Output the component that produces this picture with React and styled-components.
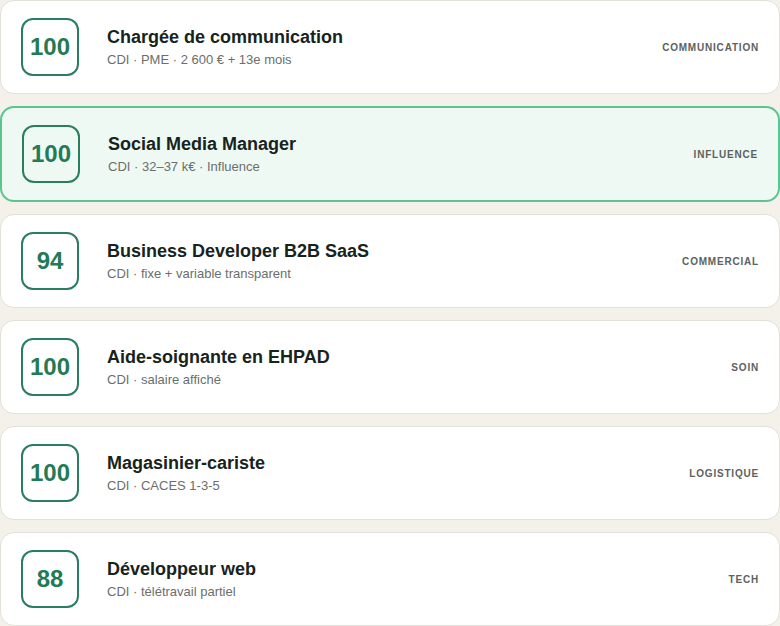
import styled, { createGlobalStyle } from "styled-components";

const GlobalStyle = createGlobalStyle`
  html, body {
    margin: 0;
    padding: 0;
    background: #f3f1ea;
    font-family: "Liberation Sans", Arial, sans-serif;
  }
`;

const List = styled.div`
  display: flex;
  flex-direction: column;
  gap: 12px;
  width: 780px;
`;

const Card = styled.div`
  display: flex;
  align-items: center;
  box-sizing: border-box;
  padding: 17px 20px;
  border-radius: 14px;
  background: ${(p) => (p.active ? "#eff9f3" : "#ffffff")};
  border: ${(p) => (p.active ? "2px solid #5cc58f" : "1px solid #e2e0d8")};
`;

const Score = styled.div`
  flex: none;
  width: 58px;
  height: 58px;
  box-sizing: border-box;
  border: 2px solid #2a7d5e;
  border-radius: 12px;
  display: flex;
  align-items: center;
  justify-content: center;
  color: #237a57;
  font-size: 24px;
  font-weight: 700;
`;

const Info = styled.div`
  flex: 1;
  margin-left: 28px;
  display: flex;
  flex-direction: column;
  gap: 4px;
`;

const Title = styled.div`
  font-size: 18px;
  font-weight: 700;
  color: #17231d;
`;

const Meta = styled.div`
  font-size: 13px;
  color: #6b6e6c;
`;

const Tag = styled.div`
  font-size: 10px;
  font-weight: 700;
  letter-spacing: 0.8px;
  color: #5d625f;
  text-transform: uppercase;
`;

const jobs = [
  { score: 100, title: "Chargée de communication", meta: "CDI · PME · 2 600 € + 13e mois", tag: "Communication" },
  { score: 100, title: "Social Media Manager", meta: "CDI · 32–37 k€ · Influence", tag: "Influence", active: true },
  { score: 94, title: "Business Developer B2B SaaS", meta: "CDI · fixe + variable transparent", tag: "Commercial" },
  { score: 100, title: "Aide-soignante en EHPAD", meta: "CDI · salaire affiché", tag: "Soin" },
  { score: 100, title: "Magasinier-cariste", meta: "CDI · CACES 1-3-5", tag: "Logistique" },
  { score: 88, title: "Développeur web", meta: "CDI · télétravail partiel", tag: "Tech" },
];

export default function App() {
  return (
    <>
      <GlobalStyle />
      <List>
        {jobs.map((job, i) => (
          <Card key={i} active={job.active}>
            <Score>{job.score}</Score>
            <Info>
              <Title>{job.title}</Title>
              <Meta>{job.meta}</Meta>
            </Info>
            <Tag>{job.tag}</Tag>
          </Card>
        ))}
      </List>
    </>
  );
}
